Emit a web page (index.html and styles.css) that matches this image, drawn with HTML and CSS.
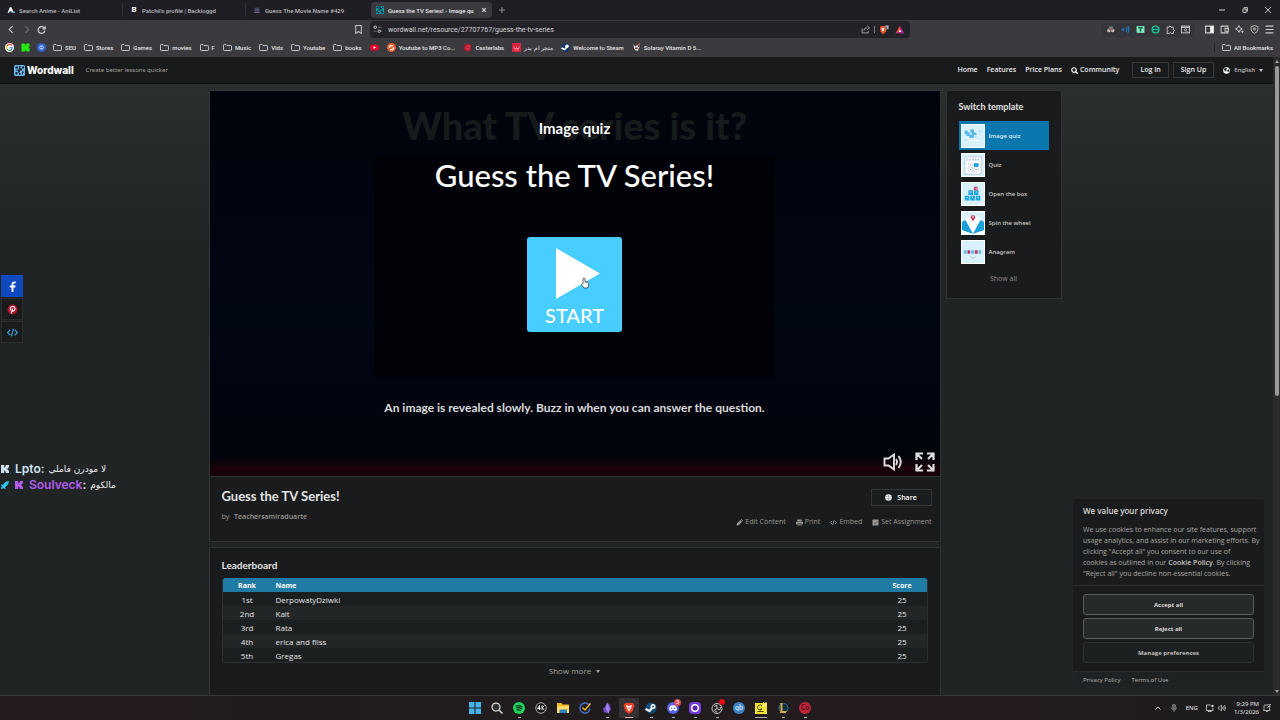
FILE: index.html
```html
<!DOCTYPE html>
<html lang="en">
<head>
<meta charset="utf-8">
<title>Guess the TV Series! - Image quiz</title>
<link rel="stylesheet" href="styles.css">
</head>
<body>
<svg class="sprite" aria-hidden="true">
  <symbol id="folder" viewBox="0 0 18 14"><path d="M1 2.500a1.500 1.500 0 0 1 1.500-1.500H6l2 2h7.500A1.500 1.500 0 0 1 17 4.500v7a1.500 1.500 0 0 1-1.500 1.500h-13A1.500 1.500 0 0 1 1 11.500z" fill="none" stroke="currentColor" stroke-width="1.600"/></symbol>
  <symbol id="ww" viewBox="0 0 12 12"><path d="M0 0h12v12H0z" fill="#1795a9"/><path d="M1 1h3v2H1zM5 0h2v3h2v2H6v2H4V5H2V4h3zM9 1h2v2H9zM1 7h2v2h2v2H3v-1H1zM8 7h2v2h1v2H8V9H7V8h1z" fill="#082c38"/></symbol>
  <symbol id="globe" viewBox="0 0 16 16"><circle cx="8" cy="8" r="7.500" fill="currentColor"/><path d="M4 3l4-1 1 2-2 2 1 2-2 3-2-3-2-2zM10 6l3-1 1 3-2 4-2-2z" fill="#191b1c"/></symbol>
  <symbol id="embed" viewBox="0 0 20 16"><path d="M6 3L1 8l5 5M14 3l5 5-5 5M12 1L8 15" fill="none" stroke="currentColor" stroke-width="2.200"/></symbol>
  <symbol id="kick" viewBox="0 0 10 10"><path d="M0 0h4v3h1V2h1V0h4v3H9v1H8v2h1v1h1v3H6V8H5V7H4v3H0z" fill="currentColor"/></symbol>
</svg>

<header class="browser">
  <div class="tabs">
    <div class="tab"><svg class="ic" viewBox="0 0 14 14"><path d="M1 12L5 2h3l3 8h3v2H8V9H5L4 12z" fill="#fff"/><path d="M9 2v8h5v2H9z" fill="#2bb0ee"/></svg><span>Search Anime - AniList</span></div>
    <div class="tab"><b class="ic letter">B</b><span>Patchii's profile | Backloggd</span></div>
    <div class="tab"><svg class="ic" viewBox="0 0 14 14"><path d="M3 3h8v2H3z" fill="#49476b"/><path d="M3 6h8v2H3z" fill="#7573b3"/><path d="M2 10h10v2H2z" fill="#8a67a8"/></svg><span>Guess The Movie.Name #429</span></div>
    <div class="tab current"><svg class="ic"><use href="#ww"/></svg><span>Guess the TV Series! - Image qu</span><button class="close" aria-label="Close tab"><svg viewBox="0 0 10 10"><path d="M2 2l6 6M8 2L2 8" stroke="#ddd" stroke-width="1.800"/></svg></button></div>
    <button class="newtab" aria-label="New tab"><svg viewBox="0 0 10 10"><path d="M5 0v10M0 5h10" stroke="#999" stroke-width="1.500"/></svg></button>
    <div class="winctl">
      <button aria-label="Minimize"><svg viewBox="0 0 10 10"><path d="M0 5h10" stroke="#ddd" stroke-width="1.600"/></svg></button>
      <button aria-label="Restore"><svg viewBox="0 0 10 10"><path d="M1.500 3.500h5.500v5.500H1.500zM3.500 3V1h5.500v6H7" stroke="#ddd" stroke-width="1.500" fill="none"/></svg></button>
      <button aria-label="Close"><svg viewBox="0 0 10 10"><path d="M0 0l10 10M10 0L0 10" stroke="#ddd" stroke-width="1.400"/></svg></button>
    </div>
  </div>
  <div class="toolbar">
    <div class="navbtns">
      <button aria-label="Back"><svg viewBox="0 0 16 16"><path d="M10 2L4 8l6 6" fill="none" stroke="#ddd" stroke-width="1.800"/></svg></button>
      <button aria-label="Forward"><svg viewBox="0 0 16 16"><path d="M6 2l6 6-6 6" fill="none" stroke="#77777b" stroke-width="1.800"/></svg></button>
      <button aria-label="Reload"><svg viewBox="0 0 16 16"><path d="M13 5.500A6 6 0 1 0 14 10M14.500 2v5h-5" fill="none" stroke="#ddd" stroke-width="2"/></svg></button>
    </div>
    <div class="location">
      <button aria-label="Bookmark this page"><svg viewBox="0 0 16 16"><path d="M3 1h10v14l-5-3.500L3 15z" fill="none" stroke="#c4c4c6" stroke-width="1.800"/></svg></button>
      <div class="address">
        <svg viewBox="0 0 16 16"><path d="M1 4h6M11 11h4" stroke="#ccc" stroke-width="1.800"/><path d="M9 4h6M1 11h5" stroke="#aaa" stroke-width="1"/><circle cx="4" cy="4" r="2.200" fill="#232228" stroke="#ccc" stroke-width="1.600"/><circle cx="11" cy="11" r="2.200" fill="#232228" stroke="#ccc" stroke-width="1.600"/></svg>
        <input type="text" aria-label="Address" value="wordwall.net/resource/27707767/guess-the-tv-series">
        <svg viewBox="0 0 16 16"><path d="M2 6v8h11v-3M5 10q0-5 6-5M11 1.500L15 5l-4 3.500" fill="none" stroke="#aaa" stroke-width="1.600"/></svg>
        <i></i>
        <svg class="big" viewBox="0 0 20 20"><path d="M2 4l3-2h7l3 2-1 9-6 6-5-6z" fill="#f0562b"/><path d="M5 6h6l-1 5-2 2-2-2z" fill="#ffe0d0"/><rect x="12" y="0" width="8" height="9" rx="2" fill="#77777b"/><path d="M15 3h2v4" stroke="#eee" fill="none"/></svg>
        <svg class="big" viewBox="0 0 20 20"><path d="M10 2l9 15H1z" fill="#a3278d"/><path d="M10 2v9l-9 6z" fill="#ff4724"/><path d="M10 9l3 5H7z" fill="#fff"/></svg>
      </div>
    </div>
    <div class="right">
      <div class="ext">
        <svg viewBox="0 0 16 16"><path d="M4 6l2-4h5l2 4 3 2H1z" fill="#777"/><circle cx="5" cy="10" r="3" fill="#bbb"/><circle cx="12" cy="10" r="3" fill="#bbb"/><path d="M5 7h7v2H5z" fill="#b24545"/></svg>
        <svg viewBox="0 0 16 16"><path d="M5 5v6M2 6v4M9 4q3 4 0 8M12 2q4 6 0 12" fill="none" stroke="#1687c9" stroke-width="1.800"/></svg>
        <svg viewBox="0 0 16 16"><rect x="1" y="2" width="14" height="12" fill="#80ecc4"/><path d="M4 5h8M8 5v7" stroke="#176148" stroke-width="2.500"/></svg>
        <svg viewBox="0 0 16 16"><circle cx="8" cy="8" r="6" fill="none" stroke="#12c79b" stroke-width="2.500"/><path d="M3 8h10" stroke="#12c79b" stroke-width="2.500"/></svg>
        <svg viewBox="0 0 16 16"><path d="M2 4h3q1-4 4-1v1h4v4q4 1 0 4v3H9q-1-3-3 0H2v-4q3-1 0-3z" fill="none" stroke="#ccc" stroke-width="1.700"/></svg>
        <svg viewBox="0 0 16 16"><rect x="1" y="2" width="14" height="12" fill="none" stroke="#ccc" stroke-width="1.700"/><path d="M1 4h14" stroke="#ccc" stroke-width="2"/><circle cx="8" cy="8.500" r="2" fill="none" stroke="#ccc" stroke-width="1.400"/><path d="M9 10l3 3" stroke="#ccc" stroke-width="1.400"/></svg>
      </div>
      <div class="tools">
        <svg viewBox="0 0 16 16"><path d="M1 2h14v12H1z" fill="none" stroke="#ccc" stroke-width="2"/><path d="M9 2h6v12H9z" fill="#eee"/></svg>
        <svg viewBox="0 0 16 16"><path d="M14 6V2H2v12h12v-3M9 6h6v5H9z" fill="none" stroke="#ccc" stroke-width="1.800"/></svg>
        <svg viewBox="0 0 16 16"><path d="M7 1l2 4 4 2-4 2-2 4-2-4-4-2 4-2z" fill="none" stroke="#ccc" stroke-width="1.700"/><path d="M13 9l1 2 2 1-2 1-1 2-1-2-2-1 2-1z" fill="#ccc"/></svg>
        <svg viewBox="0 0 16 16"><path d="M8 1l6 2v5q0 4-6 7-6-3-6-7V3z" fill="none" stroke="#bbb" stroke-width="1.700"/><circle cx="8" cy="7" r="2.800" fill="#999"/></svg>
        <svg viewBox="0 0 16 16"><path d="M1 2h14M1 8h14M1 14h14" stroke="#ccc" stroke-width="2"/></svg>
      </div>
    </div>
  </div>
  <nav class="bookmarks" aria-label="Bookmarks">
    <a href="#"><svg viewBox="0 0 18 18"><circle cx="9" cy="9" r="9" fill="#fff"/><path d="M14 5A6 6 0 0 0 4 6" fill="none" stroke="#ea4335" stroke-width="2.500"/><path d="M4 6a6 6 0 0 0 0 6" fill="none" stroke="#fbbc05" stroke-width="2.500"/><path d="M4 12a6 6 0 0 0 9 1" fill="none" stroke="#34a853" stroke-width="2.500"/><path d="M9 9h5q0 3-2 5" fill="none" stroke="#4285f4" stroke-width="2.500"/></svg></a>
    <a href="#"><svg viewBox="0 0 10 10"><path d="M1 1h3v2h1V2h1V1h3v3H8v2h1v3H6V8H5V7H4v2H1z" fill="#25e811" stroke="#25e811"/></svg></a>
    <a href="#"><svg viewBox="0 0 18 18"><circle cx="9" cy="9" r="9" fill="#2d63cf"/><circle cx="9" cy="9" r="4.500" fill="#a8c3f7"/><path d="M6 9h6" stroke="#4a78d4" stroke-width="2"/></svg></a>
    <a href="#"><svg><use href="#folder"/></svg>SEU</a>
    <a href="#"><svg><use href="#folder"/></svg>Stores</a>
    <a href="#"><svg><use href="#folder"/></svg>Games</a>
    <a href="#"><svg><use href="#folder"/></svg>movies</a>
    <a href="#"><svg><use href="#folder"/></svg>F</a>
    <a href="#"><svg><use href="#folder"/></svg>Music</a>
    <a href="#"><svg><use href="#folder"/></svg>Vids</a>
    <a href="#"><svg><use href="#folder"/></svg>Youtube</a>
    <a href="#"><svg><use href="#folder"/></svg>books</a>
    <a href="#"><svg viewBox="0 0 18 18"><rect y="3" width="18" height="12" rx="4" fill="#e3002c"/><path d="M7 6l5 3-5 3z" fill="#fff"/></svg></a>
    <a href="#"><svg viewBox="0 0 18 18"><circle cx="9" cy="9" r="9" fill="#e85a28"/><path d="M5 10V7l2-2h5M13 8v3l-2 2H6" fill="none" stroke="#fff" stroke-width="2.500"/></svg>Youtube to MP3 Co...</a>
    <a href="#"><svg viewBox="0 0 18 18"><circle cx="9" cy="9" r="8" fill="#8f1d2c"/><path d="M14 5q-5-3-8 1-3 6 3 8 3 0 5-2M7 8l8-1M7 11l7-1" fill="none" stroke="#f0374b" stroke-width="2"/></svg>Casterlabs</a>
    <a href="#"><svg viewBox="0 0 18 18"><path d="M0 0h18v18H0z" fill="#d8243c"/><path d="M4 7v4h10V7M9 7v4M5 14h8" fill="none" stroke="#ff9aa6" stroke-width="1.500"/></svg><bdi>متجر ام بدر</bdi></a>
    <a href="#"><svg viewBox="0 0 18 18"><circle cx="9" cy="9" r="9" fill="#16376b"/><path d="M1 10l6 3 5-5" stroke="#fff" stroke-width="3.500" fill="none"/><circle cx="12" cy="6.500" r="3.500" fill="#fff"/></svg>Welcome to Steam</a>
    <a href="#"><svg viewBox="0 0 18 18"><path d="M3 3l4 4 4-4 1 5 4-1-3 4-1 5-6-2-2-4z" fill="#ddd"/><path d="M1 2l4 3M12 2l4-1-2 5z" fill="#c55" stroke="#a65"/><path d="M6 9h5v3H6z" fill="#833"/></svg>Solaray Vitamin D 5...</a>
    <a class="all" href="#"><svg><use href="#folder"/></svg>All Bookmarks</a>
  </nav>
</header>

<div class="viewport">
  <div class="page">
    <header class="site">
      <a class="logo" href="#"><svg viewBox="0 0 22 22"><rect width="22" height="22" rx="3" fill="#6cb8ea"/><path d="M3 3h5v4H3zM10 2h3v5h3v4h-4v4H8v-4H4V9h6zM16 3h4v4h-4zM3 14h4v5H3zM10 16h3v4h-3zM16 13h4v2h-2v4h-2z" fill="#142430"/></svg>Wordwall</a>
      <span class="tagline">Create better lessons quicker</span>
      <nav class="menu">
        <a href="#">Home</a><a href="#">Features</a><a href="#">Price Plans</a>
        <a href="#" class="community"><svg viewBox="0 0 14 14"><circle cx="6" cy="6" r="4.500" fill="none" stroke="#fff" stroke-width="2.400"/><path d="M9 9l4.500 4.500" stroke="#fff" stroke-width="2.800"/></svg>Community</a>
        <span class="account"><button class="outline">Log In</button><button class="outline">Sign Up</button></span>
        <button class="lang"><svg><use href="#globe"/></svg>English<i class="caret"></i></button>
      </nav>
    </header>
    <div class="content">
      <main class="primary">
        <section class="stage">
          <div class="backdrop">What TV series is it?</div>
          <p class="kind">Image quiz</p>
          <h1>Guess the TV Series!</h1>
          <button class="start"><svg viewBox="0 0 44 51"><path d="M0 0l44 25.500L0 51z" fill="#fff"/></svg>START<svg class="cursor" viewBox="0 0 16 22"><path d="M4 12V3q0-2 2-2t2 2v5l5 1q2 1 2 3v4l-2 5H6l-5-7q0-2 2-1z" fill="#fff" stroke="#333" stroke-width="1.500"/><path d="M8 8v4M11 9v3" stroke="#555"/></svg></button>
          <p class="how">An image is revealed slowly. Buzz in when you can answer the question.</p>
          <div class="controls">
            <button aria-label="Sound"><svg viewBox="0 0 20 18"><path d="M1.500 5.500h4L11 1.500v15l-5.500-4h-4z" fill="none" stroke="#ddd" stroke-width="1.900"/><path d="M13 6q2 3 0 6M15.500 3q4.500 6 0 12" fill="none" stroke="#ddd" stroke-width="1.900"/></svg></button>
            <button aria-label="Full screen"><svg viewBox="0 0 20 20"><path d="M1.500 8V1.500H8M1.500 1.500L7 7M12 1.500h6.500V8M18.500 1.500L13 7M1.500 12v6.500H8M1.500 18.500L7 13M18.500 12v6.500H12M18.500 18.500L13 13" fill="none" stroke="#ddd" stroke-width="2.200"/></svg></button>
          </div>
        </section>
        <section class="info">
          <div class="row"><h2>Guess the TV Series!</h2><button class="share"><svg viewBox="0 0 16 16"><circle cx="8" cy="8" r="7.500" fill="#fff"/><path d="M0 5.500h16M0 10.500h16M8 0v16" stroke="#777" stroke-width="1"/></svg>Share</button></div>
          <div class="row meta"><span class="by">by <a href="#">Teachersamiraduarte</a></span>
            <div class="actions">
              <a href="#"><svg viewBox="0 0 16 16"><path d="M1 15l1-5 8-8 4 4-8 8zM11 1l1-1 4 4-1 1z" fill="currentColor"/></svg>Edit Content</a>
              <a href="#"><svg viewBox="0 0 16 16"><path d="M3 1h10v4H3zM0 6h16v6h-3v3H3v-3H0z" fill="currentColor"/><path d="M4 10h8v4H4z" fill="#191b1c"/><path d="M5 11h6v2H5z" fill="currentColor"/></svg>Print</a>
              <a href="#"><svg><use href="#embed"/></svg>Embed</a>
              <a href="#"><svg viewBox="0 0 16 16"><rect x="1" y="1" width="14" height="14" rx="1" fill="currentColor"/><path d="M4 8l3 3 5-6" fill="none" stroke="#555" stroke-width="2"/></svg>Set Assignment</a>
            </div>
          </div>
        </section>
        <section class="board">
          <h3>Leaderboard</h3>
          <table>
            <thead><tr><th>Rank</th><th>Name</th><th>Score</th></tr></thead>
            <tbody>
              <tr><td>1st</td><td>DerpowatyDziwki</td><td>25</td></tr>
              <tr><td>2nd</td><td>Kait</td><td>25</td></tr>
              <tr><td>3rd</td><td>Rata</td><td>25</td></tr>
              <tr><td>4th</td><td>erica and fliss</td><td>25</td></tr>
              <tr><td>5th</td><td>Gregas</td><td>25</td></tr>
            </tbody>
          </table>
          <button class="more">Show more<i class="caret"></i></button>
        </section>
      </main>
      <aside class="switch">
        <h3>Switch template</h3>
        <a class="tpl active" href="#"><svg viewBox="0 0 24 24"><path d="M3 6h3v2h3V5h4v3h3v3h-3v3H8v-2H5v-2H3z" fill="#52b7e8"/><path d="M8 8h3v3H8zM18 6h3v2h-3zM14 12h2v2h-2zM3 15h2v2H3zM18 10h2v1h-2z" fill="#b5e0f5"/><path d="M14 7l5 5M10 17h9" stroke="#fff"/></svg>Image quiz</a>
        <a class="tpl" href="#"><svg viewBox="0 0 24 24"><path d="M3 3h18v19H3z" fill="#f8fcff" stroke="#bcd"/><path d="M5 6h14" stroke="#c6cfd5" stroke-width="2" stroke-dasharray="2 1"/><path d="M7 10h5v4H7zM7 15h5v4H7zM13 15h5v4h-5z" fill="#fff" stroke="#c8d6de" stroke-width=".7"/><path d="M13 10h5v4h-5z" fill="#169ddb"/><path d="M9 12h1M9 17h1M15 17h1" stroke="#555"/></svg>Quiz</a>
        <a class="tpl" href="#"><svg viewBox="0 0 24 24"><path d="M7 8h5v5H7zM13 8h5v5h-5zM3 14h5v5H3zM9 14h5v5H9zM15 14h5v5h-5z" fill="#1fa5df"/><path d="M13 4h4v4h-4z" fill="#c7446e"/><path d="M9 10h1M15 10h1M5 16h1M11 16h1M17 16h1M15 6h1" stroke="#dff4ff" stroke-width="1.500"/></svg>Open the box</a>
        <a class="tpl" href="#"><svg viewBox="0 0 24 24"><path d="M3 8l9 15 9-15q-9-7-18 0z" fill="#fff"/><path d="M0 11q2-2 4-2l8 15-12-4zM24 11q-2-2-4-2l-8 15 12-4z" fill="#1a9fdb"/><path d="M0 20l12 4H0zM24 20l-12 4h12z" fill="#fff"/><path d="M12 10L9.500 6a2.500 2.500 0 1 1 5 0z" fill="#c72556"/><circle cx="12" cy="5.500" r="1" fill="#fff"/></svg>Spin the wheel</a>
        <a class="tpl" href="#"><svg viewBox="0 0 24 24"><path d="M2 10h3v4H2zM10 10h3v4h-3zM18 10h3v4h-3z" fill="#56bfe0"/><path d="M6 10h3v4H6zM14 10h3v4h-3z" fill="#c62b64"/><path d="M8 16l4 3 3-2" fill="none" stroke="#9bb" stroke-width=".7"/></svg>Anagram</a>
        <a class="showall" href="#">Show all</a>
      </aside>
    </div>

    <div class="social">
      <a class="fb" href="#" aria-label="Facebook"><svg viewBox="0 0 12 12"><path d="M5 12V7H3V5h2V3.500Q5 .5 8 .5h1.500v2H8Q7 2.500 7 3.500V5h2.500L9 7H7v5z" fill="#fff"/></svg></a>
      <a href="#" aria-label="Pinterest"><svg viewBox="0 0 12 12"><circle cx="6" cy="6" r="5.500" fill="#b3122b"/><path d="M4.500 10.500L6 5M4 6.800Q2.500 3 6 2.800 9 2.800 8.800 5.300 8.300 8 6.200 7.800 5.500 7.600 5.500 7" fill="none" stroke="#fff" stroke-width="1.200"/></svg></a>
      <a class="code" href="#" aria-label="Embed"><svg><use href="#embed"/></svg></a>
    </div>

    <div class="chat">
      <p class="pale"><svg><use href="#kick"/></svg><b>Lpto:</b><bdi>لا مودرن فاملي</bdi></p>
      <p class="violet"><svg class="sword" viewBox="0 0 10 10"><path d="M10 0L9 4 5 8l1 1-1 1-2-1-2 1-1-1 1-2-1-2 1-1 1 1 4-4z" fill="#2cc6e8"/></svg><svg><use href="#kick"/></svg><b>Soulveck<span>:</span></b><bdi>مالكوم</bdi></p>
    </div>

    <section class="cookie" aria-label="Privacy">
      <div class="txt"><h4>We value your privacy</h4>
      <p>We use cookies to enhance our site features, support<br>usage analytics, and assist in our marketing efforts. By<br>clicking "Accept all" you consent to our use of<br>cookies as outlined in our <a href="#">Cookie Policy</a>. By clicking<br>"Reject all" you decline non-essential cookies.</p></div>
      <div class="btns"><button>Accept all</button><button>Reject all</button><button class="dim">Manage preferences</button></div>
      <footer><a href="#">Privacy Policy</a><a href="#">Terms of Use</a></footer>
    </section>
  </div>
  <div class="scroll"><i class="up"></i><div class="thumb"></div><i class="down"></i></div>
</div>

<footer class="taskbar">
  <div class="apps">
    <button aria-label="Start"><svg viewBox="0 0 24 24"><path d="M0 0h11v11H0zM13 0h11v11H13zM0 13h11v11H0zM13 13h11v11H13z" fill="#45b4ec"/></svg></button>
    <button aria-label="Search"><svg viewBox="0 0 24 24"><circle cx="10" cy="10" r="8" fill="#333" stroke="#ddd" stroke-width="2.500"/><path d="M16 16l7 7" stroke="#ddd" stroke-width="3"/></svg></button>
    <button class="run" aria-label="Spotify"><svg viewBox="0 0 24 24"><circle cx="12" cy="12" r="12" fill="#1ed65f"/><path d="M5 8q8-2 14 2M6 12q7-2 12 2M7 16q6-1 9 1" fill="none" stroke="#112b19" stroke-width="2.200"/></svg></button>
    <button aria-label="4K"><svg viewBox="0 0 24 24"><circle cx="12" cy="12" r="10.500" fill="#17171b" stroke="#aaa" stroke-width="2"/><path d="M9 16V7l-4 6h6M14 7v9M19 7l-5 5 5 4" fill="none" stroke="#eee" stroke-width="2"/></svg></button>
    <button aria-label="Files"><svg viewBox="0 0 24 24"><path d="M0 2h9l2 3h13v17H0z" fill="#f5b92b"/><path d="M0 8h24v14H0z" fill="#ffdb62"/><path d="M5 15h15v7H5z" fill="#2d83bf"/></svg></button>
    <button aria-label="Tasks"><svg viewBox="0 0 24 24"><path d="M20 6A10 10 0 1 0 22 13" fill="none" stroke="#436dc9" stroke-width="3"/><path d="M7 11l5 5L23 3" fill="none" stroke="#f2b827" stroke-width="3"/></svg></button>
    <button class="run" aria-label="Obsidian"><svg viewBox="0 0 24 24"><path d="M12 1l5 4 3 9-5 9-9-3-2-7 4-3z" fill="#7350cd"/><path d="M12 1l-2 12 5 10 2-10z" fill="#a487f2"/></svg></button>
    <button class="run on" aria-label="Brave"><svg viewBox="0 0 24 24"><path d="M4 2h16l3 5-4 12-7 5-7-5L1 7z" fill="#ef3d26"/><path d="M6 6l6 2 6-2-2 7-4 6-4-6z" fill="#fff"/><path d="M10 11h4l-2 4z" fill="#ef3d26"/></svg></button>
    <button class="run" aria-label="Steam"><svg viewBox="0 0 24 24"><circle cx="12" cy="12" r="11" fill="#124e79"/><path d="M1 14l8 4 7-8" fill="none" stroke="#fff" stroke-width="4"/><circle cx="16" cy="9" r="5" fill="#fff"/><circle cx="16" cy="9" r="2" fill="#124e79"/></svg></button>
    <button class="run" aria-label="Discord"><svg viewBox="0 0 24 24"><circle cx="12" cy="12" r="12" fill="#5662e8"/><path d="M6 8q6-3 12 0l2 8-4 2-2-2h-4l-2 2-4-2z" fill="#fff"/><circle cx="9.500" cy="12.500" r="1.500" fill="#5662e8"/><circle cx="14.500" cy="12.500" r="1.500" fill="#5662e8"/></svg><i class="badge">3</i></button>
    <button class="run" aria-label="Recorder"><svg viewBox="0 0 24 24"><rect width="24" height="24" rx="7" fill="#753ae1"/><circle cx="12" cy="12" r="6.500" fill="#5522b4" stroke="#fff" stroke-width="3"/></svg></button>
    <button class="run" aria-label="OBS"><svg viewBox="0 0 24 24"><circle cx="12" cy="13" r="10" fill="#202024" stroke="#ccc" stroke-width="2"/><path d="M12 13V7q-4-1-5 3M12 13l5 3q3-3 1-6M12 13l-5 3q1 4 5 4" fill="none" stroke="#ccc" stroke-width="2"/></svg><i class="badge rec"></i></button>
    <button aria-label="qBittorrent"><span class="disc blue">qb</span></button>
    <button class="run wide" aria-label="Notes"><svg viewBox="0 0 24 24"><path d="M0 2h24v22H0z" fill="#f1e333"/><path d="M14 8a5 5 0 1 0 0 6h-4M5 19h12" fill="none" stroke="#4a4919" stroke-width="2"/><path d="M17 0v8h5V0M19 8v4" fill="none" stroke="#f7f08a" stroke-width="2"/></svg></button>
    <button class="run" aria-label="League"><svg viewBox="0 0 24 24"><circle cx="13" cy="12" r="9" fill="#102c39" stroke="#287c91" stroke-width="2"/><path d="M5 2h6v16h9l-3 4H5l2-3V4z" fill="#d8ab50"/></svg></button>
    <button class="run" aria-label="Creator"><span class="disc red">Co</span></button>
  </div>
  <div class="tray">
    <svg viewBox="0 0 16 16"><path d="M3 11l5-5 5 5" fill="none" stroke="#ddd" stroke-width="2"/></svg>
    <svg class="mic" viewBox="0 0 16 16"><rect x="5" y="0" width="6" height="10" rx="3" fill="#666" stroke="#999"/><path d="M3 7q0 5 5 5t5-5M8 12v4" fill="none" stroke="#999" stroke-width="1.500"/></svg>
    <span class="eng">ENG</span>
    <svg viewBox="0 0 16 16"><path d="M9 2H1v11h13V8M4 15h7" fill="none" stroke="#ccc" stroke-width="1.800"/><circle cx="13" cy="4" r="2.500" fill="#ccc"/></svg>
    <svg class="vol" viewBox="0 0 16 16"><path d="M1 6h2l4-4v12l-4-4H1z" fill="none" stroke="#ccc" stroke-width="1.500"/><path d="M9 6q2 2 0 4M11 4q3 4 0 8M13 2q4 6 0 12" fill="none" stroke="#ccc" stroke-width="1.500"/></svg>
    <time>9:29 PM<br>1/3/2026</time>
    <svg viewBox="0 0 16 16"><path d="M10 2H4q-2 0-2 2v7l-1 2h13l-1-3V8M6 15h4M8 8l2-3h4M11 1h4l-4 5h4" fill="none" stroke="#ccc" stroke-width="1.700"/></svg>
  </div>
</footer>
</body>
</html>
```
FILE: styles.css
```css
* { box-sizing: border-box; }
body {
  margin: 0;
  height: 100vh;
  overflow: hidden;
  display: flex;
  flex-direction: column;
  background: #202425;
  color: #e4e4e4;
  font: 7px/10px "Open Sans", "Noto Sans", sans-serif;
}
h1, h2, h3, h4, p { margin: 0; }
a { color: inherit; text-decoration: none; }
button { margin: 0; padding: 0; border: 0; background: none; color: inherit; font: inherit; display: flex; align-items: center; justify-content: center; }
svg { display: block; flex: none; }
.sprite { position: absolute; width: 0; height: 0; }
.caret { border: 2px solid transparent; border-top: 3px solid currentColor; border-bottom: 0; }

/* browser frame */
.browser { flex: none; font: 500 6px/9px "Roboto", "Noto Sans", sans-serif; background: #3b3a3f; }
.tabs { display: flex; align-items: center; height: 20px; background: #1f1e24; }
.tab { display: flex; align-items: center; gap: 4px; width: 123px; height: 14px; padding: 0 7px; border-right: 1px solid #303036; color: #b9b9bc; white-space: nowrap; }
.tab:nth-child(3) { border-right-color: transparent; }
.tab span { flex: 1; }
.tab.current { width: 121px; height: 16px; margin-left: 2px; padding: 0 5px; background: #3b3a3f; border: 0; border-radius: 4px; color: #e6e6e6; }
.tab .ic { width: 8px; height: 8px; flex: none; }
.letter { color: #fff; font-size: 8px; line-height: 8px; text-align: center; }
.close svg { width: 6px; height: 6px; }
.close { width: 6px; }
.newtab { margin-left: 7px; }
.newtab svg { width: 6px; height: 6px; }
.winctl { display: flex; gap: 17px; margin-left: auto; padding-right: 9px; }
.winctl svg { width: 6px; height: 6px; }
.toolbar { display: grid; grid-template-columns: 1fr auto 364px; align-items: center; height: 19px; padding-right: 6px; }
.toolbar svg { width: 9px; height: 9px; }
.navbtns { display: flex; gap: 6px; padding-left: 7px; }
.location, .right { display: flex; align-items: center; }
.right { justify-content: flex-end; }
.address { display: flex; align-items: center; gap: 6px; width: 540px; height: 17px; margin-left: 7px; padding: 0 5px 0 3px; border-radius: 4px; background: #232228; }
.address input { flex: 1; min-width: 0; border: 0; padding: 0; background: none; color: #d6d6d8; font: 7px/10px "Roboto", sans-serif; outline: 0; }
.address i { width: 1px; height: 7px; background: #77777b; margin: 0 -2px; }
.address .big { width: 10px; height: 10px; }
.ext, .tools { display: flex; align-items: center; gap: 6px; }
.ext { height: 14px; padding: 0 5px; border-radius: 4px; background: #35343a; }
.tools { padding-left: 10px; }
.bookmarks { display: flex; align-items: center; gap: 8px; height: 18px; padding: 0 7px 1px 5px; color: #e4e4e6; white-space: nowrap; }
.bookmarks a { display: flex; align-items: center; gap: 3px; }
.bookmarks svg { width: 9px; height: 9px; }
.bookmarks a:nth-child(-n+3) svg { margin-right: -1px; }
.bookmarks .all { margin-left: auto; padding-left: 7px; border-left: 1px solid #242329; }

/* site */
.viewport { flex: 1; min-height: 0; display: flex; border-bottom: 1px solid #35383a; }
.page { position: relative; flex: 1; min-width: 0; overflow: hidden; background: linear-gradient(#2c2f30 26px, #202425 190px); }
.site { display: flex; align-items: center; height: 27px; padding: 0 10px 0 14px; background: #181a1b; border-bottom: 1px solid #0c0d0e; }
.logo { display: flex; align-items: center; gap: 2px; font: 800 10px/14px "Inter", sans-serif; color: #fff; }
.logo svg { width: 11px; height: 11px; }
.tagline { margin-left: 12px; color: #a6a39e; font-size: 6px; font-family: "Noto Sans", sans-serif; }
.menu { display: flex; align-items: center; gap: 9px; margin-left: auto; font-weight: 600; color: #eee; }
.community { display: flex; align-items: center; gap: 2px; }
.community svg { width: 7px; height: 7px; }
.account { display: flex; gap: 4px; margin-left: 4px; }
.outline { height: 16px; padding: 0 7px; border: 1px solid #36393b; }
.lang { gap: 4px; font-weight: 500; font-size: 6px; font-family: "Noto Sans", sans-serif; color: #c8c5c0; }
.lang svg { width: 7px; height: 7px; color: #fff; }
.content { display: flex; align-items: flex-start; justify-content: center; gap: 5px; padding: 6px 3px 0 0; }
.primary { flex: 0 1 732px; }
.stage { position: relative; display: flex; flex-direction: column; align-items: center; height: 387px; padding-top: 25px; border: 1px solid #2f3335; color: #fff; font-family: "Lato", sans-serif; background: linear-gradient(#01040c, #010613 60%, #02040c 95%, #1a020a 98%, #16020a); }
.backdrop { position: absolute; inset: 12px 165px 96px; text-align: center; font: 900 38px/44px "Lato", sans-serif; color: #171a1b; background: linear-gradient(transparent 48px, #010207 56px, #010207 270px, transparent); }
.kind, .stage h1, .start, .how { position: relative; }
.kind { font-size: 15px; line-height: 24px; font-weight: 700; }
.stage h1 { margin-top: 16px; font-size: 31px; line-height: 38px; font-weight: 500; }
.start { flex-direction: column; justify-content: flex-start; width: 95px; height: 95px; margin-top: 43px; padding: 11px 0 0; border-radius: 3px; background: #48cdff; font-size: 20px; line-height: 22px; font-weight: 500; }
.start > svg:first-child { width: 44px; height: 51px; margin: 0 0 5px 6px; }
.start .cursor { position: absolute; left: 54px; top: 40px; width: 8px; height: 12px; }
.how { margin-top: 66px; font-size: 12px; line-height: 20px; font-weight: 700; color: #dcdcdc; }
.controls { display: flex; gap: 12px; margin: auto 5px 4px auto; }
.controls svg { width: 20px; height: 20px; }
.info { height: 65px; padding: 8px 8px 8px 12px; border: 1px solid #2f3335; border-top: 0; background: #191b1c; }
.row { display: flex; align-items: center; justify-content: space-between; }
.info h2 { font: 700 13px/20px "Lato", sans-serif; }
.share { width: 61px; height: 17px; margin-top: 4px; gap: 5px; border: 1px solid #34383a; background: #1a1d1e; font-weight: 600; color: #fff; }
.share svg { width: 7px; height: 7px; }
.meta { align-items: flex-start; margin-top: 6px; color: #9b9892; }
.by a { margin-left: 3px; font-weight: 600; }
.actions { display: flex; gap: 10px; margin-top: 5px; }
.actions a { display: flex; align-items: center; gap: 2px; }
.actions svg { width: 7px; height: 7px; }
.board { margin-top: 5px; padding: 9px 12px 26px; border: 1px solid #2f3335; background: #191b1c; }
.board h3, .switch h3 { font: 700 10px/16px "Lato", sans-serif; }
table { width: 100%; margin-top: 5px; border: 1px solid #2c3032; border-top: 0; border-radius: 3px; border-spacing: 0; overflow: hidden; font-size: 8px; line-height: 13px; }
th { height: 14px; background: #207ca5; text-align: left; font-size: 7px; font-weight: 700; color: #fff; }
th, td { padding: 0; }
td { height: 14px; }
th:first-child, td:first-child { width: 53px; padding-right: 4px; text-align: center; }
th:last-child, td:last-child { width: 49px; text-align: center; }
tbody tr { background: #1c1f20; }
tbody tr:nth-child(even) { background: #222627; }
.more { gap: 5px; margin: 3px auto 0; font-size: 8px; color: #a6a39e; }
.switch { flex: 0 0 116px; padding: 8px 12px 14px; border: 1px solid #2f3335; background: #191b1c; }
.switch h3 { margin-bottom: 6px; font-size: 9px; }
.tpl { display: flex; align-items: center; gap: 4px; height: 29px; padding-left: 2px; color: #d2cfca; font: 500 6px/10px "Noto Sans", sans-serif; }
.tpl.active { background: #0a78ae; color: #e8f4fa; }
.tpl svg { width: 24px; height: 24px; background: #d9f1fb; border: 1px solid #fff; }
.showall { display: block; margin-top: 8px; text-align: center; color: #8f8b85; }

/* overlays */
.social { position: absolute; left: 1px; top: 218px; width: 22px; display: flex; flex-direction: column; gap: 1px; }
.social a { display: flex; align-items: center; justify-content: center; height: 22px; border: 1px solid #282c2d; background: #191b1c; color: #3ba1cf; }
.social .fb { background: #0f49bd; border: 0; border-radius: 1px; }
.social svg { width: 11px; height: 11px; }
.chat { position: absolute; left: 1px; top: 404px; font: 600 12px/16px "Inter", "Noto Sans", sans-serif; }
.chat p { display: flex; align-items: center; gap: 6px; }
.chat b { font-weight: 600; }
.chat svg { width: 8px; height: 8px; }
.chat bdi { margin-left: -2px; font: 400 9px/16px "DejaVu Sans", sans-serif; color: #eee; }
.chat span { color: #fff; }
.pale { color: #cfe3f4; }
.violet { color: #b45cf0; }
.cookie { position: absolute; right: 9px; bottom: 8px; width: 191px; background: #191b1c; border-radius: 3px; color: #a9a6a1; }
.txt { padding: 6px 2px 6px 10px; border-bottom: 1px solid #2a2e30; line-height: 11px; white-space: nowrap; }
.cookie h4 { margin-bottom: 7px; font-size: 8px; line-height: 12px; font-weight: 600; color: #dcdad6; }
.cookie p a { font-weight: 600; color: #c8c5c0; }
.btns { display: flex; flex-direction: column; gap: 3px; padding: 8px 10px; }
.btns button { height: 21px; border: 1px solid #5a5e60; border-radius: 3px; background: #262a2b; font-size: 6px; font-weight: 700; color: #dcdad6; }
.btns .dim { border-color: #2c3032; background: #1d2021; color: #c0bdb8; }
.cookie footer { display: flex; gap: 11px; height: 16px; padding: 0 10px; align-items: center; background: #1f2223; border-top: 1px solid #2a2e30; font-size: 6px; color: #bab7b2; }
.scroll { flex: none; width: 7px; display: flex; flex-direction: column; align-items: center; padding: 3px 0 2px; background: #2a2b2d; color: #a0a0a0; }
.up, .down { border: 2px solid transparent; border-top: 0; border-bottom: 3px solid #a0a0a0; }
.thumb { width: 4px; height: 330px; margin: 3px 0 auto; border-radius: 2px; background: #9a9a9a; }
.down { transform: rotate(180deg); }

/* taskbar */
.taskbar { position: relative; flex: none; display: flex; align-items: center; justify-content: center; height: 24px; background: linear-gradient(90deg, #241b1c, #201c1e 50%, #261c1d 75%, #1c1c1e); font-family: "Noto Sans", sans-serif; }
.apps { display: flex; gap: 2px; }
.apps button { position: relative; width: 20px; height: 20px; border-radius: 2px; }
.apps svg, .disc { width: 12px; height: 12px; }
.apps .on { background: #353033; }
.run::after { content: ""; position: absolute; bottom: 0; left: 9px; width: 3px; height: 1px; background: #aaa; }
.on::after { left: 6px; width: 8px; background: #f0a8a8; }
.wide::after { left: 4px; width: 12px; }
.disc { border-radius: 6px; font: 700 7px/11px "Lato", sans-serif; text-align: center; }
.blue { background: #3d82c4; color: #cfe6fb; }
.red { background: #c02438; color: #44101a; }
.badge { position: absolute; right: 2px; top: 1px; width: 7px; height: 7px; border-radius: 4px; background: #e24a54; color: #fff; font: 6px/7px "Noto Sans", sans-serif; text-align: center; }
.rec { width: 6px; height: 6px; background: #e30c16; }
.tray { position: absolute; right: 9px; top: 2px; display: flex; align-items: center; height: 20px; gap: 8px; font-size: 6px; }
.tray svg { width: 8px; height: 8px; }
.tray .vol { margin-left: -4px; }
.tray time { line-height: 8px; text-align: right; }
.tray time + svg { margin-left: -4px; }
```
